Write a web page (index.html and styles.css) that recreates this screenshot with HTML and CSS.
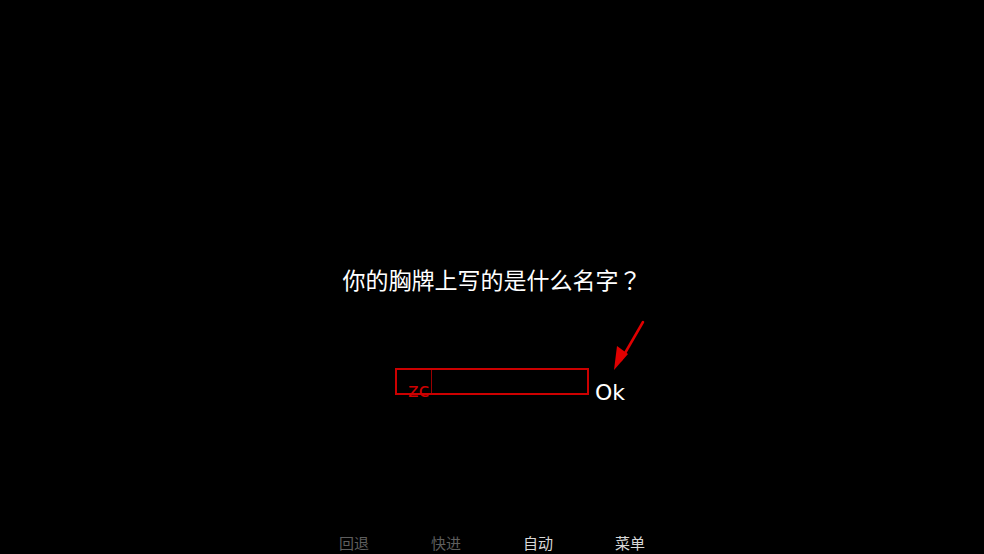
FILE: index.html
```html
<!DOCTYPE html>
<html lang="zh">
<head>
<meta charset="utf-8">
<title>胸牌</title>
<link rel="stylesheet" href="styles.css">
</head>
<body>
<div class="screen">
  <main class="dialog">
    <h1 class="question">你的胸牌上写的是什么名字<span class="qmark" lang="zh-Hant">？</span></h1>
    <div class="answer-row">
      <div class="input-box">
        <span class="typed">zc</span>
        <span class="caret"></span>
      </div>
      <span class="ok">Ok</span>
    </div>
  </main>
  <nav class="menu">
    <span class="menu-item dim">回退</span>
    <span class="menu-item dim">快进</span>
    <span class="menu-item">自动</span>
    <span class="menu-item">菜单</span>
  </nav>
  <svg class="arrow" width="40" height="60" viewBox="0 0 40 60" aria-hidden="true">
    <line x1="33" y1="2" x2="11" y2="40" stroke="#e00000" stroke-width="2.5" stroke-linecap="round"/>
    <polygon points="4,50 7,26 18,34" fill="#e00000"/>
  </svg>
</div>
</body>
</html>
```

FILE: styles.css
```css
html, body {
  margin: 0;
  padding: 0;
  background: #000;
}
body {
  font-family: "DejaVu Sans", "Noto Sans CJK SC", sans-serif;
  color: #fff;
}
.screen {
  position: relative;
  width: 984px;
  height: 554px;
  display: flex;
  flex-direction: column;
  overflow: hidden;
}
.dialog {
  flex: 1;
  display: flex;
  flex-direction: column;
  padding-top: 263px;
}
.question {
  margin: 0;
  font-family: "Noto Sans CJK SC", sans-serif;
  font-weight: normal;
  font-size: 23px;
  line-height: 32px;
  text-align: center;
}
.qmark {
  font-family: "Noto Sans CJK TC", "Noto Sans CJK SC", sans-serif;
}
.answer-row {
  display: flex;
  align-items: flex-end;
  margin-top: 73px;
  padding-left: 395px;
}
.input-box {
  width: 179px;
  height: 23px;
  border: 2px solid #cc0000;
  display: flex;
  align-items: flex-start;
  padding-left: 11px;
}
.typed {
  margin-top: 10px;
  font-size: 20px;
  line-height: 20px;
  color: #d00000;
}
.caret {
  align-self: stretch;
  width: 1px;
  margin-left: 1px;
  background: #9a0000;
}
.ok {
  margin-left: 6px;
  margin-bottom: -10px;
  font-size: 22px;
  line-height: 24px;
  color: #fff;
}
.menu {
  display: flex;
  justify-content: center;
  padding-bottom: 0;
}
.menu-item {
  width: 92px;
  text-align: center;
  font-size: 15px;
  line-height: 20px;
  color: #d8d8d8;
}
.menu-item.dim {
  color: #5e5e5e;
}
.arrow {
  position: absolute;
  left: 610px;
  top: 320px;
}
```
